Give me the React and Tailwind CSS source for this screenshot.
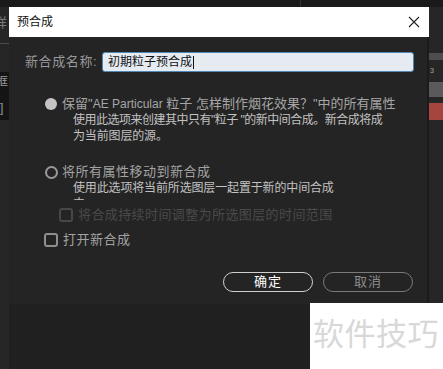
import React from "react";

const font = { fontFamily: '"Liberation Sans", "Noto Sans CJK SC", sans-serif' };

function Radio({ filled }) {
  return filled ? (
    <span className="block h-[12px] w-[12px] shrink-0 rounded-full bg-[#c4c4c4]" />
  ) : (
    <span className="block h-[13px] w-[13px] shrink-0 rounded-full border-2 border-[#9a9a9a]" />
  );
}

function Checkbox({ disabled }) {
  return (
    <span
      className={
        "block h-[14px] w-[14px] shrink-0 rounded-[3px] border-2 " +
        (disabled ? "border-[#474747]" : "border-[#8e8e8e]")
      }
    />
  );
}

export default function App() {
  return (
    <div
      className="relative flex h-[369px] w-[443px] flex-col overflow-hidden bg-[#202020] text-[13px]"
      style={font}
    >
      <div className="flex h-[7px] shrink-0 bg-[#1a1a1a]">
        <div className="w-[300px]" />
        <div className="w-px bg-[#333]" />
      </div>

      <div className="flex flex-1">
        {/* left app strip */}
        <div className="flex w-[9px] shrink-0 flex-col bg-[#262626]">
          <div className="mt-[8px] h-[16px] overflow-hidden whitespace-nowrap text-[13px] leading-[16px] text-[#7a7a7a]">
            <span className="-ml-[6px] inline-block">样</span>
          </div>
          <div className="mt-[12px] h-px bg-[#4a4a4a]" />
          <div className="mt-[28px] flex h-[48px] flex-col overflow-hidden bg-[#141414] pt-[2px] text-[12px] leading-[16px] text-[#9a9a9a]">
            <span className="-ml-[4px]">框</span>
            <span className="mt-[10px]">]</span>
          </div>
        </div>

        {/* dialog */}
        <div className="flex w-[420px] shrink-0 flex-col">
          <div className="flex h-[30px] items-center justify-between bg-white pl-[8px] pr-[9px]">
            <span className="text-[12px] text-[#111]">预合成</span>
            <svg width="12" height="12" viewBox="0 0 12 12">
              <path d="M1 1 L11 11 M11 1 L1 11" stroke="#222" strokeWidth="1.1" />
            </svg>
          </div>

          <div className="flex h-[267px] flex-col border-r-2 border-[#1b1b1b] bg-[#242424]">
            <div className="mt-[15px] flex items-center pl-[16px] pr-[13px]">
              <span className="w-[77px] text-[13px] tracking-[0.6px] text-[#999]">新合成名称:</span>
              <div className="flex h-[20px] flex-1 items-center rounded-[3px] border border-[#4d88b8] bg-[#e5ebf1] pl-[5px]">
                <span className="text-[12px] leading-none text-[#111]">初期粒子预合成</span>
                <span className="ml-px h-[13px] w-px bg-[#111]" />
              </div>
            </div>

            <div className="mt-[24px] flex flex-col pl-[36px]">
              <div className="flex items-center gap-[5px] leading-[16px]">
                <Radio filled />
                <span className="whitespace-nowrap text-[#a6a6a6]">
                  保留"<span className="text-[12px]">AE Particular</span> 粒子 怎样制作烟花效果？"中的所有属性
                </span>
              </div>
              <div className="ml-[28px] whitespace-nowrap text-[12px] leading-[16px] tracking-[-0.15px] text-[#c2c2c2]">
                <div className="tracking-[-0.5px]">使用此选项来创建其中只有"粒子 "的新中间合成。新合成将成</div>
                <div>为当前图层的源。</div>
              </div>

              <div className="mt-[20px] flex items-center gap-[4px] leading-[16px]">
                <Radio />
                <span className="whitespace-nowrap tracking-[0.5px] text-[#a3a3a3]">将所有属性移动到新合成</span>
              </div>
              <div className="ml-[28px] h-[20px] overflow-hidden text-[12px] leading-[16px] tracking-[-0.15px] text-[#c2c2c2]">
                <div>使用此选项将当前所选图层一起置于新的中间合成</div>
                <div>中。</div>
              </div>

              <div className="ml-[14px] mt-[7px] flex items-center gap-[5px] leading-[16px]">
                <Checkbox disabled />
                <span className="whitespace-nowrap tracking-[0.4px] text-[#4a4a4a]">
                  将合成持续时间调整为所选图层的时间范围
                </span>
              </div>

              <div className="-ml-[1px] mt-[9px] flex items-center gap-[5px] leading-[16px]">
                <Checkbox />
                <span className="tracking-[0.5px] text-[#a3a3a3]">打开新合成</span>
              </div>
            </div>

            <div className="mt-[24px] flex justify-end gap-[10px] pr-[14px]">
              <button className="flex h-[20px] w-[90px] items-center justify-center rounded-full border border-[#cfcfcf] text-[13px] tracking-[1px] text-white">
                确定
              </button>
              <button className="flex h-[20px] w-[90px] items-center justify-center rounded-full border border-[#7a7a7a] text-[13px] tracking-[1px] text-[#8c8c8c]">
                取消
              </button>
            </div>
          </div>
        </div>

        {/* right app strip */}
        <div className="flex w-[14px] shrink-0 flex-col">
          <div className="flex h-[297px] flex-col bg-[#262626]">
            <div className="mt-[46px] h-[7px] bg-[#4e4e4e]" />
            <div className="mt-[5px] h-[12px] pl-[1px] text-[7px] leading-[12px] text-[#aaa]">3</div>
            <div className="mt-[5px] h-[15px] bg-[#5a5a5a]" />
            <div className="mt-[6px] h-[17px] bg-[#a4453f]" />
          </div>
        </div>
      </div>

      {/* watermark overlay */}
      <div className="absolute left-[310px] top-[303px] flex h-[66px] w-[133px] items-center bg-white pb-[4px] pl-[3px]">
        <span className="whitespace-nowrap text-[31px] leading-none tracking-[0.5px] text-[#d8d8d8]">软件技巧</span>
      </div>
    </div>
  );
}
